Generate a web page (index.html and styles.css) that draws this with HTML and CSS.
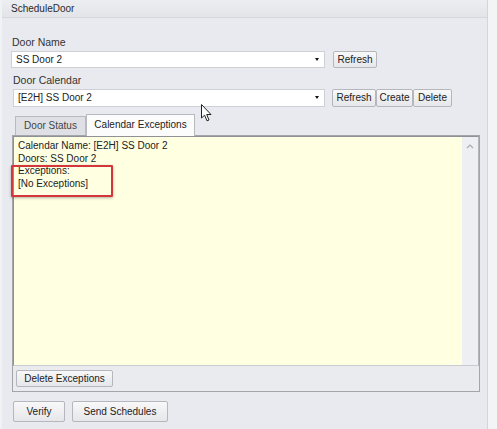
FILE: index.html
```html
<!DOCTYPE html>
<html>
<head>
<meta charset="utf-8">
<link rel="stylesheet" href="styles.css">
</head>
<body>
<div class="window">
  <div class="titlebar">ScheduleDoor</div>
  <div class="content">
    <div class="label">Door Name</div>
    <div class="row">
      <div class="combo">SS Door 2<span class="arrow"></span></div>
      <button class="btn btn-refresh1">Refresh</button>
    </div>
    <div class="label label2">Door Calendar</div>
    <div class="row row2">
      <div class="combo combo2">[E2H] SS Door 2<span class="arrow"></span></div>
      <div class="btn-group">
        <button class="btn btn-refresh2">Refresh</button>
        <button class="btn btn-create">Create</button>
        <button class="btn btn-delete">Delete</button>
      </div>
    </div>
    <div class="tabs">
      <div class="tab">Door Status</div>
      <div class="tab tab-active">Calendar Exceptions</div>
    </div>
    <div class="panel">
      <div class="memo">
        <div class="memo-text">
          <div>Calendar Name: [E2H] SS Door 2</div>
          <div>Doors: SS Door 2</div>
          <div>Exceptions:</div>
          <div>[No Exceptions]</div>
        </div>
        <div class="scrollbar">
          <svg class="chev" width="8" height="5" viewBox="0 0 8 5"><path d="M1 4 L4 1 L7 4" fill="none" stroke="#a9abb0" stroke-width="1.2"/></svg>
        </div>
        <div class="highlight"></div>
      </div>
      <div class="panel-foot">
        <button class="btn btn-delex">Delete Exceptions</button>
      </div>
    </div>
    <div class="footer">
      <button class="btn btn-big btn-verify">Verify</button>
      <button class="btn btn-big btn-send">Send Schedules</button>
    </div>
  </div>
  <svg class="cursor" width="12" height="18" viewBox="0 0 12 18"><path d="M0.5 0.5 L0.5 14 L3.6 11.2 L6 16.8 L8 16 L5.7 10.5 L10 10.5 Z" fill="#ffffff" stroke="#222" stroke-width="1" stroke-linejoin="round"/></svg>
</div>
</body>
</html>
```
FILE: styles.css
```css
html, body {
  margin: 0;
  padding: 0;
}
body {
  background: #f3f4f6;
  font-family: "Liberation Sans", Arial, sans-serif;
  font-size: 10px;
  color: #222;
}
.window {
  position: relative;
  width: 488px;
  height: 429px;
  background: #e9eaef;
  border-left: 2px solid #f1f2f4;
  border-right: 1px solid #d3d5da;
  box-sizing: border-box;
}
.titlebar {
  height: 17px;
  line-height: 17px;
  padding-left: 9px;
  font-size: 10px;
  color: #2b2b2b;
  background: linear-gradient(#eceef1, #e2e4e8);
  border-bottom: 1px solid #d5d7dc;
}
.content {
  display: flex;
  flex-direction: column;
  padding: 0 0 0 9px;
}
.label {
  margin-top: 18px;
  height: 12px;
  line-height: 12px;
  font-size: 10.5px;
  color: #333;
  padding-left: 1px;
}
.label2 {
  margin-top: 6px;
  padding-left: 2px;
}
.row {
  display: flex;
  margin-top: 3px;
}
.row2 {
  height: 18px;
}
.combo {
  position: relative;
  width: 314px;
  height: 17px;
  box-sizing: border-box;
  background: #fff;
  border: 1px solid #cdd0d5;
  padding-left: 4px;
  line-height: 15px;
  color: #222;
}
.combo2 {
  height: 18px;
  line-height: 16px;
  margin-left: 2px;
  width: 312px;
}
.arrow {
  position: absolute;
  right: 5px;
  top: 6px;
  width: 0;
  height: 0;
  border-left: 2.5px solid transparent;
  border-right: 2.5px solid transparent;
  border-top: 3px solid #111;
}
.btn {
  font-family: "Liberation Sans", Arial, sans-serif;
  font-size: 10px;
  color: #222;
  height: 17px;
  padding: 0;
  margin: 0;
  box-sizing: border-box;
  border: 1px solid #b5b7bc;
  border-radius: 2px;
  background: linear-gradient(#f8f8f9, #e6e7ea);
  line-height: 14px;
  text-align: center;
}
.btn-refresh1 {
  width: 44px;
  margin-left: 8px;
}
.btn-group {
  display: flex;
  margin-left: 7px;
}
.btn-group .btn {
  height: 18px;
}
.btn-refresh2 { width: 44px; }
.btn-create { width: 37px; }
.btn-delete { width: 39px; }
.tabs {
  display: flex;
  align-items: flex-end;
  margin-top: 7px;
  padding-left: 4px;
  height: 21px;
}
.tab {
  width: 71px;
  height: 19px;
  box-sizing: border-box;
  background: #dfe0e5;
  border: 1px solid #b8bac0;
  border-bottom: none;
  text-align: center;
  line-height: 18px;
  color: #444;
  font-size: 10px;
}
.tab-active {
  width: 109px;
  background: #fcfcfd;
  line-height: 20px;
  color: #222;
  position: relative;
  z-index: 2;
  margin-bottom: -1px;
  height: 22px;
}
.panel {
  margin-left: 1px;
  width: 468px;
  height: 257px;
  box-sizing: border-box;
  border: 1px solid #a3a5aa;
  background: #eaebef;
  display: flex;
  flex-direction: column;
}
.memo {
  position: relative;
  height: 230px;
  display: flex;
  box-sizing: border-box;
  border-top: 1px solid #8f9196;
  border-left: 1px solid #8f9196;
  border-right: 1px solid #b3b5ba;
  border-bottom: 1px solid #c9cbd0;
}
.memo-text {
  flex: 1;
  background: #ffffe2;
  padding: 3px 0 0 4px;
  line-height: 12.5px;
  font-size: 10px;
  color: #222;
}
.scrollbar {
  width: 16px;
  background: #eeeff2;
  display: flex;
  justify-content: center;
  padding-top: 7px;
  box-sizing: border-box;
}
.chev {
  display: block;
}
.highlight {
  position: absolute;
  left: -3px;
  top: 28px;
  width: 102px;
  height: 32px;
  box-sizing: border-box;
  border: 2.5px solid #d3363b;
  border-radius: 1px;
  box-shadow: 0 1px 3px rgba(0, 0, 0, 0.3);
}
.panel-foot {
  display: flex;
  align-items: center;
  padding-left: 3px;
  flex: 1;
}
.btn-delex {
  width: 97px;
  height: 17px;
}
.footer {
  display: flex;
  margin-top: 9px;
  padding-left: 2px;
  gap: 7px;
}
.btn-big {
  height: 21px;
  line-height: 18px;
}
.btn-verify { width: 52px; }
.btn-send { width: 96px; }
.cursor {
  position: absolute;
  left: 199px;
  top: 104px;
}
```
